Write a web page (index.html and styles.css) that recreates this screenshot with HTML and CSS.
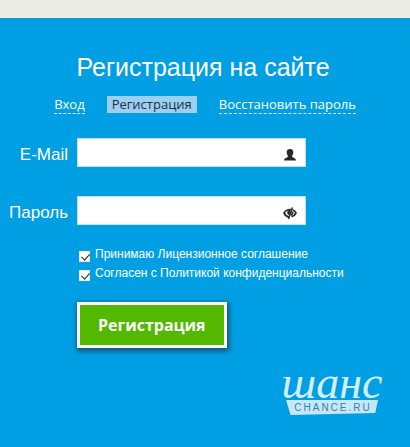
FILE: index.html
```html
<!DOCTYPE html>
<html lang="ru">
<head>
<meta charset="utf-8">
<title>Регистрация на сайте</title>
<link rel="stylesheet" href="styles.css">
</head>
<body>
<header class="topbar"></header>
<main class="panel">
  <h1 class="title">Регистрация на сайте</h1>
  <nav class="tabs">
    <a class="tab" href="#login">Вход</a>
    <a class="tab current" href="#register">Регистрация</a>
    <a class="tab" href="#restore">Восстановить пароль</a>
  </nav>
  <form class="form">
    <div class="row">
      <label class="label" for="email">E-Mail</label>
      <div class="field">
        <input class="input" id="email" type="email">
        <svg class="icon" viewBox="0 0 14 14" aria-hidden="true"><path d="M7 1C4.500 1 3.700 2.500 3.700 4.300C3.700 5.900 4.200 7 4.800 7.800V9C4 9.700 1.200 9.800 1 12.500H13C12.800 9.800 10 9.700 9.200 9V7.800C9.800 7 10.300 5.900 10.300 4.300C10.300 2.500 9.500 1 7 1Z" fill="#292929"/></svg>
      </div>
    </div>
    <div class="row">
      <label class="label" for="password">Пароль</label>
      <div class="field">
        <input class="input" id="password" type="password">
        <svg class="icon" viewBox="0 0 14 14" aria-hidden="true"><path d="M6 11C3.500 10.500 2 9 1 7C2.500 4.500 4.500 3.300 8 3.500M10 4C11.500 4.700 12.500 5.700 13 7C12 9 10.500 10.300 8.500 10.800" fill="none" stroke="#292929" stroke-width="1.700"/><path d="M7.500 4C4.500 4 3.700 6 4.500 8L6.500 9.500Z" fill="#292929"/><path d="M9.500 1.500L5.500 13M9.500 5.500C10 7 9.500 8.500 8 9.500" fill="none" stroke="#292929" stroke-width="1.500"/></svg>
      </div>
    </div>
    <div class="actions">
      <label class="check"><input class="box" type="checkbox" checked><span>Принимаю Лицензионное соглашение</span></label>
      <label class="check"><input class="box" type="checkbox" checked><span>Согласен с Политикой конфиденциальности</span></label>
      <button class="submit" type="submit">Регистрация</button>
    </div>
  </form>
  <div class="logo">
    <span class="logo-name">шанс</span>
    <span class="logo-site">CHANCE.RU</span>
  </div>
</main>
</body>
</html>
```
FILE: styles.css
```css
* { box-sizing: border-box; }

body {
  display: flex;
  flex-direction: column;
  min-height: 100vh;
  margin: 0;
  background: #009fe3;
  color: #fff;
  font-family: "Liberation Sans", Arial, sans-serif;
}

.topbar {
  height: 18px;
  background: #ebebe5;
}

.panel {
  flex: 1;
  padding: 32px 28px 28px 8px;
  border-top: 1px solid #1d8fc4;
}

.title {
  margin: 0 0 0 16px;
  font-size: 25px;
  line-height: 32px;
  font-weight: 400;
  text-align: center;
}

.tabs {
  display: flex;
  justify-content: center;
  align-items: flex-start;
  gap: 22px;
  margin: 13px 0 0 20px;
  font-family: "Open Sans", sans-serif;
  font-size: 13px;
  line-height: 17px;
}

.tab {
  border-bottom: 1px dashed #d5f1fc;
  color: #fff;
  font-weight: 500;
  text-decoration: none;
  white-space: nowrap;
}

.current {
  padding: 0 5px;
  border-bottom: 0;
  background: #9dcff2;
  color: #1c3148;
  font-weight: 400;
}

.form { margin-top: 24px; }

.row {
  display: flex;
  align-items: center;
  gap: 9px;
  margin-bottom: 29px;
}

.label {
  width: 60px;
  padding-top: 4px;
  font-size: 17px;
  text-align: right;
}

.field {
  position: relative;
  width: 229px;
}

.input {
  display: block;
  width: 100%;
  height: 29px;
  padding: 4px 30px 4px 8px;
  border: 1px solid #b9e4f7;
  background: #fff;
  font-size: 14px;
}

.icon {
  position: absolute;
  top: 10px;
  right: 9px;
  width: 14px;
  height: 14px;
}

.actions {
  display: flex;
  flex-direction: column;
  align-items: flex-start;
  margin: -8px 0 0 69px;
}

.check {
  display: flex;
  align-items: flex-start;
  gap: 5px;
  height: 19px;
  font-size: 12px;
  line-height: 17px;
  white-space: nowrap;
}

.box {
  appearance: none;
  position: relative;
  width: 11px;
  height: 11px;
  margin: 5px 0 0 2px;
  border: 1px solid #e8e8e8;
  background: #fff;
}

.box:checked::after {
  content: "";
  position: absolute;
  left: 3px;
  top: 0;
  width: 4px;
  height: 7px;
  border: solid #222;
  border-width: 0 1px 1px 0;
  transform: rotate(42deg);
}

.submit {
  margin-top: 18px;
  padding: 8px 18px;
  border: 3px solid #fff;
  background: #52b800;
  box-shadow: 1px 2px 5px 1px #174f70;
  color: #fff;
  font: 700 16px/24px "Open Sans", sans-serif;
}

.logo {
  display: flex;
  flex-direction: column;
  align-items: center;
  width: 100px;
  margin: 18px 0 0 auto;
  color: #d3effb;
}

.logo-name {
  font: italic 400 46px/34px "Liberation Serif", serif;
}

.logo-site {
  width: 92px;
  padding-left: 2px;
  background: #c4e8f8;
  clip-path: polygon(0 0, 100% 0, 97% 87%, 5% 100%);
  color: #3b7fa5;
  font-size: 10px;
  line-height: 15px;
  letter-spacing: 2px;
  text-align: center;
}
```
